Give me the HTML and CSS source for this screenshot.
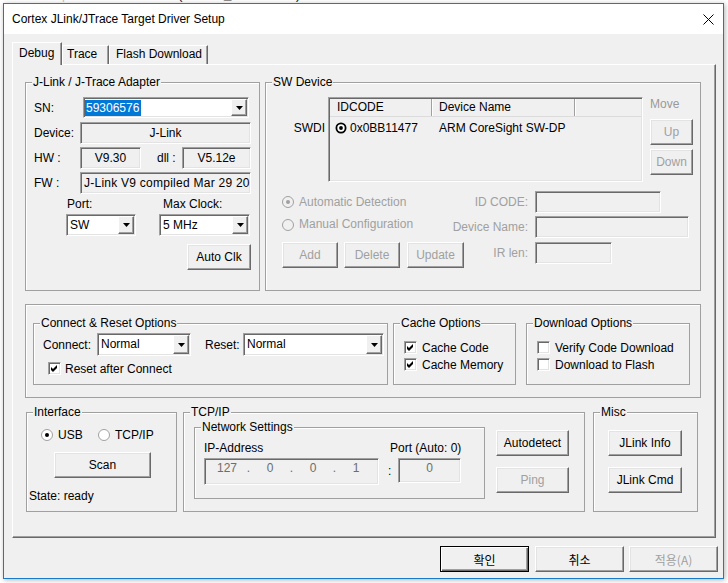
FILE: index.html
```html
<!DOCTYPE html>
<html lang="en">
<head>
<meta charset="utf-8">
<title>Cortex JLink/JTrace Target Driver Setup</title>
<link rel="stylesheet" href="styles.css">
</head>
<body>
<div class="behind"><div class="code"><span class="ln">28</span><span class="bar">|</span><span class="kw">#elif</span> defined(BOARD_PCA10052)</div></div>
<div class="window">
  <div class="titlebar">
    <span class="title">Cortex JLink/JTrace Target Driver Setup</span>
    <svg class="close" width="11" height="11" viewBox="0 0 11 11"><path d="M0.5 0.5L10.5 10.5M10.5 0.5L0.5 10.5" stroke="#000" stroke-width="1"/></svg>
  </div>
  <div class="client">
    <div class="tabs">
      <div class="tab t-debug">Debug</div>
      <div class="tab t-trace">Trace</div>
      <div class="tab t-flash">Flash Download</div>
    </div>
    <div class="panel">
      <div class="row1">
        <div class="group g-jlink">
          <div class="legend">J-Link / J-Trace Adapter</div>
          <div class="jl-row r-sn"><span class="jl-lab">SN:</span>
            <div class="combo sunken c-sn"><span class="val"><span class="sel">59306576</span></span><span class="dd"><svg width="7" height="4" viewBox="0 0 7 4"><path d="M0 0H7L3.5 4Z" fill="#000"/></svg></span></div>
          </div>
          <div class="jl-row r-dev"><span class="jl-lab">Device:</span><div class="field sunken f-wide">J-Link</div></div>
          <div class="jl-row r-hw"><span class="jl-lab">HW :</span><div class="field sunken f-hw">V9.30</div><span class="dll-lab">dll :</span><div class="field sunken f-dll">V5.12e</div></div>
          <div class="jl-row r-fw"><span class="jl-lab">FW :</span><div class="field sunken f-wide f-left">J-Link V9 compiled Mar 29 2017</div></div>
          <div class="pc-labels"><span class="pl-port">Port:</span><span>Max Clock:</span></div>
          <div class="pc-combos">
            <div class="combo sunken c-port"><span class="val">SW</span><span class="dd"><svg width="7" height="4" viewBox="0 0 7 4"><path d="M0 0H7L3.5 4Z" fill="#000"/></svg></span></div>
            <div class="combo sunken c-clk"><span class="val">5 MHz</span><span class="dd"><svg width="7" height="4" viewBox="0 0 7 4"><path d="M0 0H7L3.5 4Z" fill="#000"/></svg></span></div>
          </div>
          <div class="autoclk-row"><div class="btn b-autoclk">Auto Clk</div></div>
        </div>
        <div class="group g-sw">
          <div class="legend">SW Device</div>
          <div class="sw-top">
            <div class="swdi">SWDI</div>
            <div class="listbox sunken">
              <div class="lb-head"><span class="lc1">IDCODE</span><span class="lc2">Device Name</span><span class="lc3"></span></div>
              <div class="lb-row"><span class="lc1"><svg width="12" height="12" viewBox="0 0 12 12"><circle cx="6" cy="6" r="4.6" fill="#fff" stroke="#000" stroke-width="1.8"/><circle cx="6" cy="6" r="1.9" fill="#000"/></svg>0x0BB11477</span><span class="lc2">ARM CoreSight SW-DP</span></div>
            </div>
            <div class="move-col">
              <div class="move">Move</div>
              <div class="btn dis">Up</div>
              <div class="btn dis b-down">Down</div>
            </div>
          </div>
          <div class="sw-row r-a">
            <div class="sw-l">
              <span class="radio dis"><svg width="12" height="12" viewBox="0 0 12 12"><circle cx="6" cy="6" r="5.5" fill="#f0f0f0" stroke="#a0a0a0"/><circle cx="6" cy="6" r="2" fill="#a0a0a0"/></svg>Automatic Detection</span>
              <span class="dis">ID CODE:</span>
            </div>
            <div class="field sunken f-id"></div>
          </div>
          <div class="sw-row r-b">
            <div class="sw-l">
              <span class="radio dis r-manual"><svg width="12" height="12" viewBox="0 0 12 12"><circle cx="6" cy="6" r="5.5" fill="#f0f0f0" stroke="#a0a0a0"/></svg>Manual Configuration</span>
              <span class="dis">Device Name:</span>
            </div>
            <div class="field sunken f-dn"></div>
          </div>
          <div class="sw-row r-c">
            <div class="sw-l">
              <span class="btnset"><span class="btn dis b-add">Add</span><span class="btn dis b-del">Delete</span><span class="btn dis b-upd">Update</span></span>
              <span class="dis ir-lab">IR len:</span>
            </div>
            <div class="field sunken f-ir"></div>
          </div>
        </div>
      </div>

      <div class="group g-opts">
        <div class="opts-inner">
          <div class="group g-conn">
            <div class="legend">Connect &amp; Reset Options</div>
            <div class="conn-row">
              <span class="conn-lab">Connect:</span>
              <div class="combo sunken c-conn"><span class="val">Normal</span><span class="dd"><svg width="7" height="4" viewBox="0 0 7 4"><path d="M0 0H7L3.5 4Z" fill="#000"/></svg></span></div>
              <span class="reset-lab">Reset:</span>
              <div class="combo sunken c-reset"><span class="val">Normal</span><span class="dd"><svg width="7" height="4" viewBox="0 0 7 4"><path d="M0 0H7L3.5 4Z" fill="#000"/></svg></span></div>
            </div>
            <div class="chk-row conn-chk"><span class="cb sunken"><svg width="11" height="11" viewBox="0 0 11 11"><path d="M2 4L4 6L8 2V5L4 9L2 7Z" fill="#000"/></svg></span>Reset after Connect</div>
          </div>
          <div class="group g-cache">
            <div class="legend">Cache Options</div>
            <div class="chk-inner">
              <div class="chk-row cr1"><span class="cb sunken"><svg width="11" height="11" viewBox="0 0 11 11"><path d="M2 4L4 6L8 2V5L4 9L2 7Z" fill="#000"/></svg></span>Cache Code</div>
              <div class="chk-row cr2"><span class="cb sunken"><svg width="11" height="11" viewBox="0 0 11 11"><path d="M2 4L4 6L8 2V5L4 9L2 7Z" fill="#000"/></svg></span>Cache Memory</div>
            </div>
          </div>
          <div class="group g-dl">
            <div class="legend">Download Options</div>
            <div class="chk-inner">
              <div class="chk-row cr1"><span class="cb sunken"></span>Verify Code Download</div>
              <div class="chk-row cr2"><span class="cb sunken"></span>Download to Flash</div>
            </div>
          </div>
        </div>
      </div>

      <div class="row3">
        <div class="group g-if">
          <div class="legend">Interface</div>
          <div class="if-radios">
            <span class="radio if-usb"><svg width="12" height="12" viewBox="0 0 12 12"><circle cx="6" cy="6" r="5.5" fill="#fff" stroke="#a0a0a0"/><circle cx="6" cy="6" r="2" fill="#000"/></svg>USB</span>
            <span class="radio"><svg width="12" height="12" viewBox="0 0 12 12"><circle cx="6" cy="6" r="5.5" fill="#fff" stroke="#a0a0a0"/></svg>TCP/IP</span>
          </div>
          <div class="btn b-scan">Scan</div>
          <div class="state">State: ready</div>
        </div>
        <div class="group g-tcp">
          <div class="legend">TCP/IP</div>
          <div class="tcp-inner">
            <div class="group g-net">
              <div class="legend">Network Settings</div>
              <div class="net-inner">
                <div class="net-c1">
                  <div class="net-lab">IP-Address</div>
                  <div class="ipf sunken"><span class="seg">127</span><span class="dot">.</span><span class="seg">0</span><span class="dot">.</span><span class="seg">0</span><span class="dot">.</span><span class="seg">1</span></div>
                </div>
                <div class="net-c2">
                  <div class="net-lab port-lab">Port (Auto: 0)</div>
                  <div class="port-row"><span class="colon">:</span><div class="portf sunken">0</div></div>
                </div>
              </div>
            </div>
            <div class="ad-col">
              <div class="btn">Autodetect</div>
              <div class="btn dis b-ping">Ping</div>
            </div>
          </div>
        </div>
        <div class="group g-misc">
          <div class="legend">Misc</div>
          <div class="misc-inner">
            <div class="btn b-misc">JLink Info</div>
            <div class="btn b-misc b-misc2">JLink Cmd</div>
          </div>
        </div>
      </div>
    </div>
    <div class="footer">
      <div class="btn fbtn b-ok">확인</div>
      <div class="btn fbtn b-cancel">취소</div>
      <div class="btn fbtn dis b-apply">적용(A)</div>
    </div>
  </div>
</div>
</body>
</html>
```
FILE: styles.css
```css
* { box-sizing: border-box; }
html, body { margin: 0; padding: 0; }
body {
  width: 728px; height: 583px; overflow: hidden;
  background: #fff;
  font-family: "Liberation Sans", Arial, sans-serif;
  font-size: 12px; color: #000;
}
.behind { height: 3px; overflow: hidden; }
.code {
  margin-top: -11px; padding-left: 36px;
  font-family: "Liberation Mono", monospace; font-size: 13px; line-height: 14px;
  white-space: pre; color: #333;
}
.code .ln { color: #888; margin-right: 8px; }
.code .bar { color: #bbb; margin-right: 8px; }
.code .kw { color: #c8860a; }

.window {
  margin-left: 3px; width: 721px; height: 576px;
  border: 1px solid #1979ca; background: #f0f0f0;
  box-shadow: 1px 1px 5px rgba(0,0,0,.3);
}
.titlebar {
  height: 30px; background: #fff;
  display: flex; align-items: center; padding: 0 9px 0 8px;
}
.title { flex: 1; white-space: nowrap; }
.client { padding: 8px 0 0 8px; }

.tabs { display: flex; align-items: flex-end; height: 22px; }
.tab {
  height: 19px; line-height: 16px; white-space: nowrap;
  border-top: 1px solid #fff; border-left: 1px solid #fff; border-right: 1px solid #696969;
  box-shadow: inset -1px 0 #a0a0a0;
}
.t-debug {
  width: 50px; height: 23px; margin-bottom: -1px; line-height: 20px; padding-left: 6px;
  background: #f0f0f0; position: relative; z-index: 1;
}
.t-trace { width: 47px; padding-left: 4px; }
.t-flash { width: 99px; padding-left: 6px; }

.panel {
  width: 704px; height: 474px;
  border: 1px solid; border-color: #fff #696969 #696969 #fff;
  box-shadow: inset -1px -1px #a0a0a0;
  padding: 17px 0 0 12px;
}

.group { border: 1px solid #a0a0a0; box-shadow: inset 1px 1px #fff; }
.legend {
  width: max-content; height: 15px; line-height: 15px;
  margin: -8px 0 -7px 6px; padding: 0 1px; background: #f0f0f0;
  position: relative;
}

.sunken {
  border: 1px solid; border-color: #a0a0a0 #fff #fff #a0a0a0;
  box-shadow: inset 1px 1px #696969, inset -1px -1px #e3e3e3;
}
.field {
  height: 22px; line-height: 20px; text-align: center;
  white-space: nowrap; overflow: hidden; background: #f0f0f0;
}
.combo { display: flex; height: 22px; background: #fff; }
.val { flex: 1; padding-left: 3px; line-height: 20px; white-space: nowrap; overflow: hidden; }
.dd {
  flex: none; width: 16px; margin: 1px 1px 1px 0;
  border: 1px solid; border-color: #fff #696969 #696969 #fff;
  box-shadow: inset -1px -1px #a0a0a0; background: #f0f0f0;
  display: flex; align-items: center; justify-content: center;
}
.btn {
  height: 26px; background: #f0f0f0;
  border: 1px solid; border-color: #fff #696969 #696969 #fff;
  box-shadow: inset -1px -1px #a0a0a0, inset 1px 1px #e3e3e3;
  display: flex; align-items: center; justify-content: center; white-space: nowrap;
}
.dis { color: #a0a0a0; }

/* J-Link */
.row1 { display: flex; gap: 5px; }
.g-jlink { width: 235px; height: 209px; }
.g-sw { width: 436px; height: 209px; }
.jl-row { display: flex; align-items: center; padding-left: 8px; }
.jl-lab { width: 46px; flex: none; }
.r-sn { margin-top: 14px; height: 21px; }
.c-sn { margin-left: 3px; width: 166px; height: 21px; }
.c-sn .val { padding-left: 1px; line-height: 19px; }
.sel { display: inline-block; background: #0078d7; color: #fff; padding: 0 2px 0 1px; line-height: 16px; vertical-align: middle; }
.r-dev { margin-top: 4px; }
.r-hw, .r-fw { margin-top: 3px; }
.f-wide { width: 171px; }
.f-left { text-align: left; padding-left: 3px; letter-spacing: 0.25px; }
.f-hw { width: 61px; }
.dll-lab { margin-left: 16px; width: 25px; }
.f-dll { width: 69px; }
.pc-labels { display: flex; margin-top: 3px; height: 15px; line-height: 15px; padding-left: 41px; }
.pl-port { width: 96px; }
.pc-combos { display: flex; margin-top: 2px; padding-left: 40px; }
.c-port { width: 70px; }
.c-clk { width: 91px; margin-left: 23px; }
.autoclk-row { display: flex; justify-content: flex-end; margin-top: 8px; padding-right: 8px; }
.b-autoclk { width: 64px; }

/* SW device */
.sw-top { display: flex; margin-top: 14px; }
.swdi { width: 62px; padding: 24px 3px 0 0; text-align: right; line-height: 15px; }
.listbox { width: 315px; height: 85px; background: #f0f0f0; padding: 1px; }
.lb-head { display: flex; height: 18px; line-height: 17px; border-bottom: 1px solid #dcdcdc; }
.lb-head .lc1, .lb-head .lc2 { border-right: 1px solid #a0a0a0; box-shadow: 1px 0 #fff; }
.lc1 { width: 102px; padding-left: 7px; flex: none; }
.lc2 { width: 143px; padding-left: 7px; flex: none; }
.lc3 { flex: 1; }
.lb-row { display: flex; height: 22px; line-height: 22px; }
.lb-row .lc1 { padding-left: 5px; display: flex; align-items: center; gap: 3px; }
.move-col { margin-left: 7px; width: 43px; }
.move { height: 22px; line-height: 14px; color: #999; }
.b-down { margin-top: 4px; }

.sw-row { display: grid; grid-template-columns: 269px auto; height: 22px; }
.sw-l { display: flex; justify-content: space-between; align-items: center; padding: 0 7px 0 16px; }
.sw-row .field { align-self: start; }
.r-a { margin-top: 9px; }
.r-b { margin-top: 3px; }
.r-c { margin-top: 4px; height: 26px; }
.r-c .sw-l { align-items: flex-start; }
.r-manual { align-self: flex-start; margin-top: 1px; line-height: 15px; }
.ir-lab { line-height: 22px; }
.f-id { width: 126px; }
.f-dn { width: 154px; }
.f-ir { width: 77px; }
.radio { display: flex; align-items: center; gap: 5px; white-space: nowrap; }
.btnset { display: flex; }
.b-add { width: 56px; }
.b-del { width: 56px; margin-left: 6px; }
.b-upd { width: 57px; margin-left: 7px; }

/* Options */
.g-opts { width: 676px; height: 94px; margin-top: 13px; }
.opts-inner { display: flex; padding: 18px 0 0 7px; }
.g-conn { width: 355px; height: 62px; }
.g-cache { width: 123px; height: 62px; margin-left: 5px; }
.g-dl { width: 164px; height: 62px; margin-left: 10px; }
.conn-row { display: flex; align-items: center; margin-top: 9px; padding-left: 9px; }
.conn-lab { width: 54px; }
.c-conn { width: 94px; height: 23px; }
.c-reset { width: 141px; height: 23px; }
.c-conn .val, .c-reset .val { line-height: 21px; }
.reset-lab { margin-left: 14px; width: 38px; }
.chk-row { display: flex; align-items: center; gap: 5px; height: 13px; white-space: nowrap; }
.conn-chk { margin-top: 6px; padding-left: 14px; gap: 4px; }
.chk-inner { padding-left: 10px; }
.cr1 { margin-top: 17px; }
.cr2 { margin-top: 4px; }
.cb { flex: none; width: 13px; height: 13px; background: #fff; display: flex; }

/* Row 3 */
.row3 { display: flex; margin-top: 14px; margin-left: 1px; }
.g-if { width: 151px; height: 100px; }
.g-tcp { width: 402px; height: 100px; margin-left: 6px; }
.g-misc { width: 105px; height: 100px; margin-left: 8px; }
.if-radios { display: flex; align-items: center; margin-top: 14px; height: 15px; padding-left: 14px; }
.if-usb { width: 57px; }
.b-scan { width: 97px; margin: 10px 0 0 27px; }
.state { margin-top: 11px; line-height: 15px; padding-left: 2px; }

.tcp-inner { display: flex; }
.g-net { width: 291px; height: 72px; margin: 14px 0 0 10px; }
.net-inner { display: flex; }
.net-c1 { padding-left: 9px; width: 184px; flex: none; }
.net-lab { margin-top: 13px; height: 15px; line-height: 15px; }
.ipf {
  width: 175px; height: 27px; margin-top: 2px; display: flex;
  padding: 2px 0 0 3px; color: #6d6d6d; background: #f0f0f0;
}
.ipf .seg { width: 38px; text-align: center; line-height: 14px; }
.ipf .dot { width: 5px; text-align: center; line-height: 14px; }
.net-c2 { margin-left: 9px; }
.port-lab { padding-left: 2px; }
.port-row { display: flex; align-items: center; margin-top: 2px; }
.colon { width: 10px; }
.portf { width: 63px; height: 25px; text-align: center; line-height: 14px; padding-top: 2px; color: #6d6d6d; background: #f0f0f0; }
.ad-col { margin: 17px 0 0 11px; width: 73px; }
.b-ping { margin-top: 11px; }
.misc-inner { padding: 17px 0 0 14px; }
.b-misc { width: 74px; }
.b-misc2 { margin-top: 11px; }

/* Footer */
.footer { display: flex; justify-content: flex-end; margin-top: 8px; padding-right: 5px; }
.fbtn { width: 89px; font-family: "Noto Sans CJK KR", "Liberation Sans", sans-serif; }
.b-ok {
  border: 1px solid #000;
  box-shadow: inset 1px 1px #fff, inset -1px -1px #696969, inset -2px -2px #a0a0a0;
}
.b-cancel { margin-left: 6px; }
.b-apply { margin-left: 5px; }
```
